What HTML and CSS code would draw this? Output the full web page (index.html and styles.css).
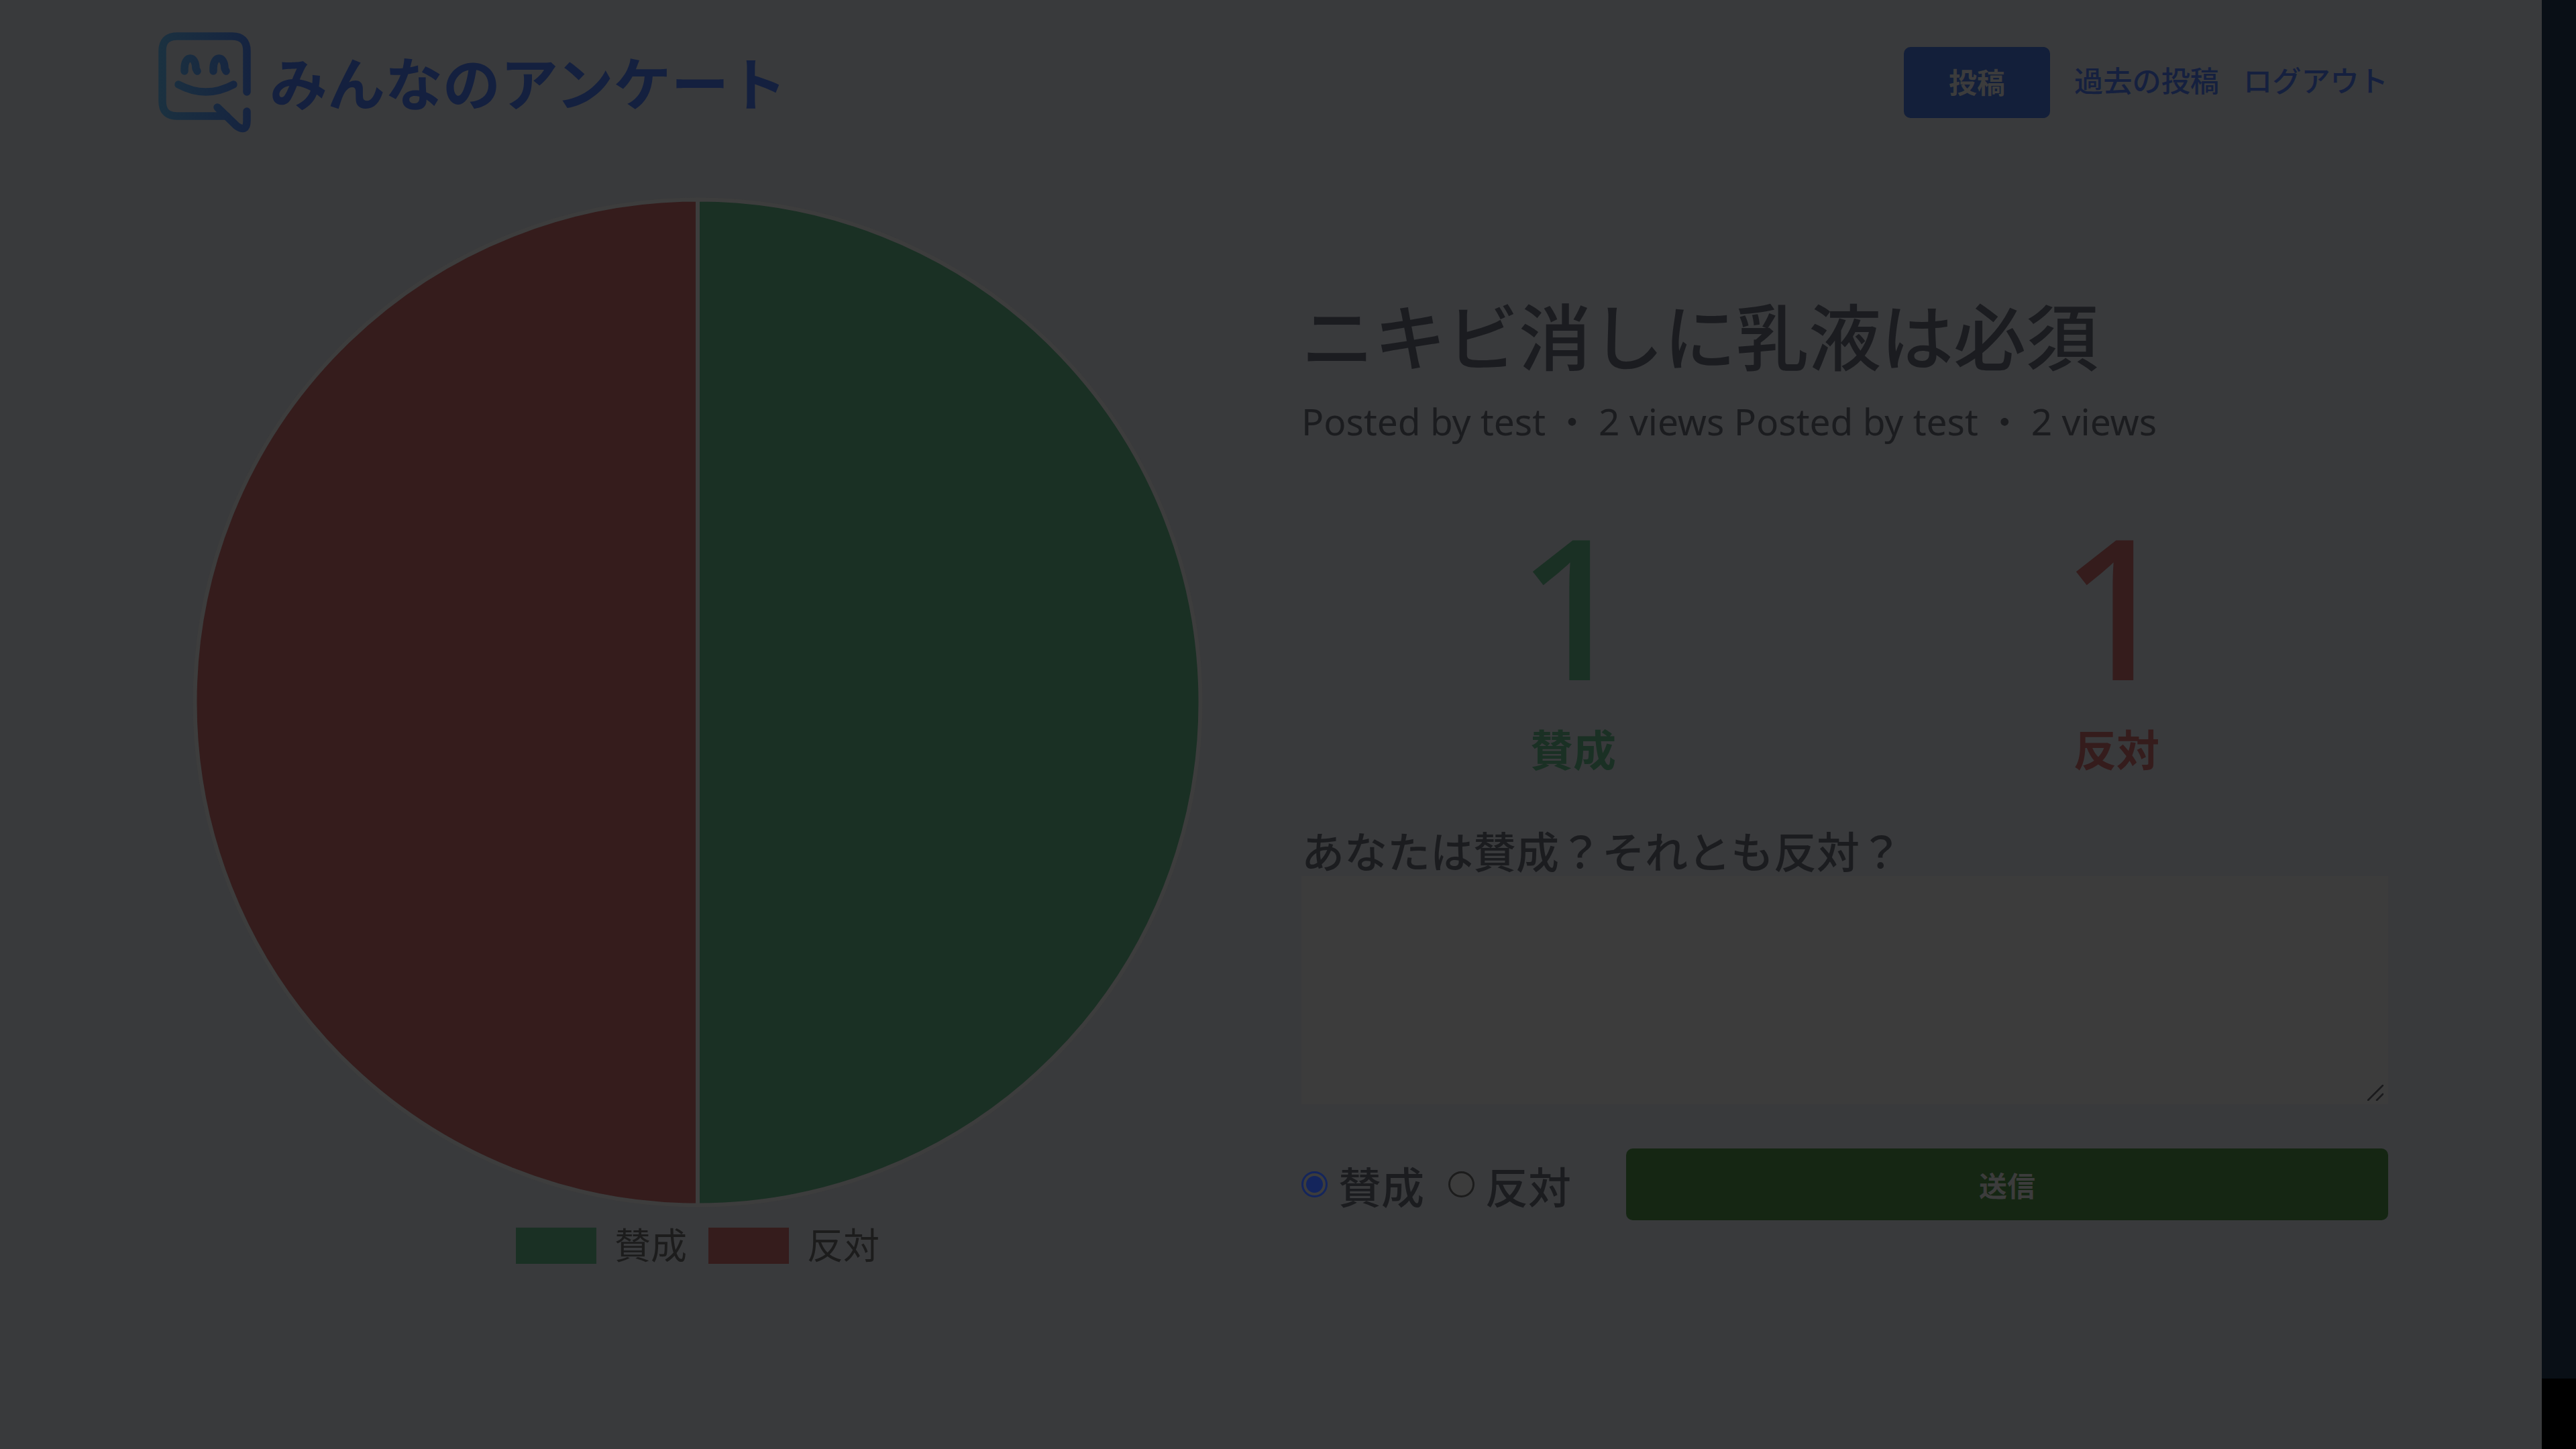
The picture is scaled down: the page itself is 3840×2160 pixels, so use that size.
FILE: index.html
```html
<!DOCTYPE html>
<html lang="ja">
<head>
<meta charset="utf-8">
<title>みんなのアンケート</title>
<link rel="stylesheet" href="styles.css">
</head>
<body>
<div class="page">
  <main class="main">
    <header class="header">
      <a class="brand">
        <svg class="brand-icon" viewBox="16 18 138 150" fill="none" stroke="url(#logoGrad)" stroke-width="11.5" stroke-linecap="round" stroke-linejoin="round">
          <defs>
            <linearGradient id="logoGrad" gradientUnits="userSpaceOnUse" x1="16" y1="90" x2="154" y2="90">
              <stop offset="0" stop-color="#1b3140"/>
              <stop offset="1" stop-color="#152340"/>
            </linearGradient>
          </defs>
          <path d="M148 107V46Q148 24 126 24H44Q22 24 22 46V121Q22 143 44 143H118"/>
          <path d="M104 130L133 158Q148 168 148 150V136"/>
          <path d="M55 76V72C55 52 72 52 72 72L74 76"/>
          <path d="M98 76V72C98 52 115 52 115 72L117 76"/>
          <path d="M46 96Q87 118 128 96"/>
        </svg>
        <span class="brand-name">みんなのアンケート</span>
      </a>
      <nav class="nav">
        <a class="nav-button">投稿</a>
        <a class="nav-link">過去の投稿</a>
        <a class="nav-link">ログアウト</a>
      </nav>
    </header>
    <section class="content">
      <div class="chart-col">
        <svg class="pie" viewBox="0 0 1510 1510">
          <path class="slice-yes" d="M755 5.5A749.5 749.5 0 0 1 755 1504.5Z"/>
          <path class="slice-no" d="M755 1504.5A749.5 749.5 0 0 1 755 5.5Z"/>
        </svg>
        <div class="legend">
          <span class="swatch swatch-yes"></span><span class="legend-label">賛成</span>
          <span class="swatch swatch-no"></span><span class="legend-label">反対</span>
        </div>
      </div>
      <div class="detail-col">
        <h1 class="title">ニキビ消しに乳液は必須</h1>
        <p class="meta">Posted by test<span class="dot">・</span>2 views Posted by test<span class="dot">・</span>2 views</p>
        <div class="scores">
          <div class="score score-yes"><div class="score-num">1</div><div class="score-label">賛成</div></div>
          <div class="score score-no"><div class="score-num">1</div><div class="score-label">反対</div></div>
        </div>
        <form class="vote">
          <label class="question" for="comment">あなたは賛成？それとも反対？</label>
          <div class="field">
            <textarea class="comment" id="comment"></textarea>
            <svg class="grip" viewBox="0 0 24 24" fill="none" stroke="#1a1a1c" stroke-width="2.6" stroke-linecap="round"><path d="M1 23L23 1"/><path d="M14 23L23 14"/></svg>
          </div>
          <div class="actions">
            <label class="choice"><input class="radio" type="radio" name="v" checked><span>賛成</span></label>
            <label class="choice"><input class="radio" type="radio" name="v"><span>反対</span></label>
            <button class="submit" type="button">送信</button>
          </div>
        </form>
      </div>
    </section>
  </main>
  <div class="rail"></div>
</div>
</body>
</html>
```
FILE: styles.css
```css
* { box-sizing: border-box; }
html, body { margin: 0; padding: 0; height: 2160px; overflow: hidden; background: #000; }
body { font-family: "Noto Sans CJK JP", "Noto Sans", sans-serif; color: #1b1c1f; }
.page { display: flex; align-items: flex-start; width: 3840px; height: 2160px; }
.main { width: 3789px; height: 2160px; flex: none; background: #393a3c; padding: 48px 229px 0 236px; }
.rail { width: 51px; height: 2055px; flex: none; background: #090f16; }

.header { display: flex; justify-content: space-between; height: 150px; }
.brand { display: flex; align-items: flex-start; gap: 28px; }
.brand-icon { width: 138px; height: 150px; display: block; }
.brand-name { font-size: 86px; line-height: 76px; font-weight: 700; color: #14203f; margin-top: 35px; }
.nav { display: flex; align-items: flex-start; gap: 36px; padding-top: 22px; }
.nav-button { width: 218px; height: 106px; border-radius: 10px; background: #131f3a; color: #3c3c3c; font-size: 42px; line-height: 50px; padding-bottom: 4px; font-weight: 700; display: flex; align-items: center; justify-content: center; }
.nav-link { color: #15203f; font-size: 43.2px; line-height: 52px; margin-top: 22px; font-weight: 500; }

.content { display: grid; grid-template-columns: 1608px 1620px; column-gap: 96px; margin-top: 94px; }
.chart-col { display: flex; flex-direction: column; align-items: center; }
.pie { width: 1510px; height: 1510px; display: block; }
.slice-yes { fill: #1a3024; stroke: #3d3d3d; stroke-width: 6; }
.slice-no { fill: #351c1c; stroke: #3d3d3d; stroke-width: 6; }
.legend { display: flex; align-items: center; height: 54px; margin-top: 28px; }
.swatch { width: 120px; height: 54px; display: block; }
.swatch-yes { background: #1a3024; }
.swatch-no { background: #351c1c; margin-left: 32px; }
.legend-label { font-size: 54px; line-height: 54px; color: #1c1c1c; margin: -6px 0 0 27px; }

.detail-col { display: flex; flex-direction: column; padding-top: 140px; }
.title { margin: 0; font-size: 108px; line-height: 130px; font-weight: 500; color: #1b1c20; }
.meta { margin: 25px 0 0; font-family: "Noto Sans", sans-serif; font-size: 55px; line-height: 76px; color: #1b1c1f; }
.dot { font-family: "Noto Sans CJK JP", sans-serif; margin: 0 12px; }
.scores { display: grid; grid-template-columns: 1fr 1fr; margin-top: 89px; }
.score { display: flex; flex-direction: column; align-items: center; }
.score-num { font-family: "Noto Sans", sans-serif; font-size: 292px; line-height: 292px; font-weight: 500; }
.score-label { font-size: 64px; line-height: 80px; font-weight: 700; margin-top: 27px; }
.score-yes { color: #1a3024; }
.score-no { color: #351c1c; }

.vote { display: flex; flex-direction: column; margin-top: 72px; }
.question { font-size: 64px; line-height: 80px; font-weight: 500; color: #1b1c1f; }
.field { position: relative; height: 340px; margin-top: 0; }
.comment { display: block; width: 100%; height: 100%; resize: none; border: 0; outline: 0; background: #3c3c3c; }
.grip { position: absolute; right: 7px; bottom: 5px; width: 24px; height: 24px; }
.actions { display: flex; align-items: center; margin-top: 66px; }
.choice { display: flex; align-items: center; font-size: 64px; line-height: 80px; font-weight: 500; margin-right: 36px; }
.radio { appearance: none; width: 39px; height: 39px; margin: 0 16px 0 0; border-radius: 50%; border: 3px solid #1c1c1c; background: #3c3c3c; flex: none; }
.radio:checked { border-color: #14255c; background: radial-gradient(circle, #14255c 0 12px, #3c3c3c 13px); }
.submit { flex: 1; height: 107px; margin-left: 46px; border: 0; border-radius: 10px; background: #152613; color: #3c3c3c; font-family: inherit; font-size: 42px; font-weight: 700; }
```
